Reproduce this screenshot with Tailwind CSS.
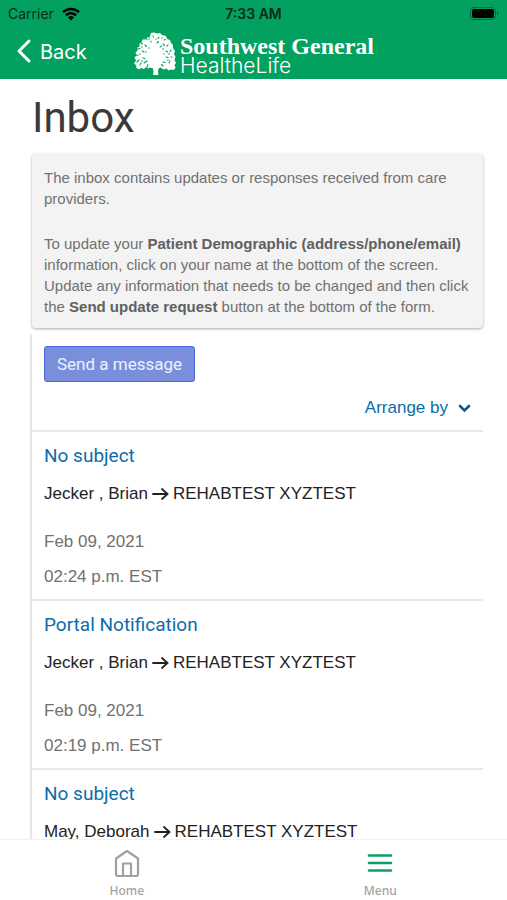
<!DOCTYPE html>
<html lang="en">
<head>
  <meta charset="UTF-8">
  <meta name="viewport" content="width=device-width, initial-scale=1.0">
  <title>Inbox</title>
  <script src="https://cdn.jsdelivr.net/npm/@tailwindcss/browser@4"></script>
</head>
<body class="bg-white flex flex-col h-screen overflow-hidden font-['Liberation_Sans',sans-serif]">
  <header class="bg-[#02a160] shrink-0">
    <!-- Status bar -->
    <div class="grid grid-cols-3 items-center h-7 px-2 text-sm text-[#062a1b] font-[Inter,sans-serif]">
      <div class="flex items-center gap-2">
        <span>Carrier</span>
        <svg class="w-[18px] h-[14px]" viewBox="0 0 18 14" fill="none" stroke="#000" stroke-width="2.5">
          <path d="M1 5.2a11.6 11.6 0 0 1 16 0"/>
          <path d="M3.9 8.3a7.4 7.4 0 0 1 10.2 0"/>
          <path d="M9 13.6 6 10.5a4.4 4.4 0 0 1 6 0z" fill="#000" stroke="none"/>
        </svg>
      </div>
      <span class="text-center font-semibold">7:33 AM</span>
      <svg class="justify-self-end w-[29px] h-[14px]" viewBox="0 0 29 14">
        <rect x=".5" y=".5" width="25" height="12" rx="3.5" fill="none" stroke="#03693f"/>
        <rect x="2" y="2" width="22" height="9" rx="2" fill="#000"/>
        <path d="M27 4.5c2 .6 2 3.4 0 4z" fill="#03693f"/>
      </svg>
    </div>
    <!-- Title bar -->
    <div class="relative flex items-center justify-center h-[51px]">
      <button type="button" class="absolute left-4 top-[10px] flex items-center gap-2 text-white text-xl font-[Inter,sans-serif]">
        <svg class="w-4 h-7" viewBox="0 0 16 28" fill="none" stroke="currentColor" stroke-width="3" stroke-linecap="round" stroke-linejoin="round">
          <path d="M13 3 3 13l10 10"/>
        </svg>
        Back
      </button>
      <div class="flex items-center gap-1 text-white">
        <svg class="w-[43px] h-[43px]" viewBox="0 0 43 43">
          <path fill="#fff" d="M18 1l3-.5 3 1 3-.5 2 2 4 1 1 3 3 1 1 3 2 2 0 3 2 3-1 3 1.500 3-1 3 1.500 3-1.500 2 1 3-2 2-3-.5-2 1-2-2-3 1-3-2-2 1-.5 3 .5 5h-5.500l.5-5-.5-3-3-1-2 1-2-1.500-2 2-3-1-2 1.500-3-2 .5-2-2.500-2 2-3-1.500-3 2-2-1-3 2-2 0-3 2-1 0-3 2-1 1-3 3 0 1-2 3 0z"/>
          <g fill="none" stroke="#02a160" stroke-width="1.1" stroke-linecap="round">
            <path d="M8 11l1.500 1M13 6l1 1.500M20 4l.5 1M26 5l-1 1.500M31 8l1.500-.5M5 17l2-.5M12 13l1.500 1.500M18 9l0 1M24 11l1.500-1.500M30 12l1.500 1.500M35 13l-1 1M3.500 23l1.500 .5M9 19l2 1M33 19l1.500 1M38 18l-1 1.500M4 30l2-2M10 26l2 .5M33 25l2 .5M39 25l-1 0M7 33l1-2M11 31l3-2M30 30l2 .5M36 31l1-2M14 35l1-2.500M30 34l-1.500-1.500M27 15l1.500-1"/>
          </g>
          <g fill="#02a160">
            <circle cx="16" cy="7" r=".7"/><circle cx="23" cy="7" r=".7"/><circle cx="29" cy="6" r=".7"/><circle cx="9" cy="15" r=".7"/>
            <circle cx="16" cy="16" r=".7"/><circle cx="30" cy="17" r=".8"/><circle cx="7" cy="22" r=".8"/><circle cx="13" cy="20" r=".7"/>
            <circle cx="36" cy="22" r=".8"/><circle cx="31" cy="22" r=".7"/><circle cx="35" cy="28" r=".8"/><circle cx="9" cy="29" r=".8"/>
          </g>
        </svg>
        <div class="flex flex-col">
          <span class="font-['Liberation_Serif',serif] font-bold text-2xl leading-6">Southwest General</span>
          <span class="font-[Inter,sans-serif] font-light text-[21px] leading-4">HealtheLife</span>
        </div>
      </div>
    </div>
  </header>

  <main class="flex-1 min-h-0 overflow-y-auto [scrollbar-width:none] pl-8 pr-6">
    <h1 class="pt-[14px] font-[Roboto,sans-serif] text-[42px] leading-[50px] text-[#3a3a3a]">Inbox</h1>

    <section class="mt-[11px] px-3 pt-[13px] pb-[11px] rounded-sm bg-[#f3f3f3] shadow-[0_1px_3px_#00000055] text-[15px] leading-[21px] text-[#717171]">
      <p>The inbox contains updates or responses received from care providers.</p>
      <p class="mt-6">To update your <strong class="text-[#606060]">Patient Demographic (address/phone/email)</strong> information, click on your name at the bottom of the screen. Update any information that needs to be changed and then click the <strong class="text-[#606060]">Send update request</strong> button at the bottom of the form.</p>
    </section>

    <section class="mt-[6px] -ml-[2px] border-l-2 border-[#e6e6e6]">
      <div class="px-3 pt-3 pb-3 flex flex-col items-start">
        <button type="button" class="h-9 px-3 rounded-[3px] border border-[#4565d6] bg-[#7a8fdb] text-[#eef1ff] text-[17px] leading-5 font-[Roboto,sans-serif]">Send a message</button>
        <button type="button" class="mt-4 self-end flex items-center gap-[10px] text-[17px] leading-5 text-[#0d6ca8]">
          Arrange by
          <svg class="w-[13px] h-[9px]" viewBox="0 0 13 9" fill="none" stroke="#07589a" stroke-width="2.6" stroke-linecap="round">
            <path d="M2 2l4.5 4.5L11 2"/>
          </svg>
        </button>
      </div>

      <ul>
        <li class="border-t-2 border-[#e8e8e8] px-3 pt-3 pb-[10px]">
          <a href="#" class="block font-[Roboto,sans-serif] text-[19px] leading-6 text-[#0d6ca8]">No subject</a>
          <p class="mt-[14px] flex items-center gap-1 text-[17px] leading-6 text-[#222]">Jecker , Brian
            <svg class="w-[17px] h-[14px]" viewBox="0 0 17 14" fill="none" stroke="currentColor" stroke-width="1.8" stroke-linecap="round"><path d="M1 7h14M10 2l5.5 5-5.5 5"/></svg>
            REHABTEST XYZTEST</p>
          <p class="mt-6 text-[17px] leading-6 text-[#717171]">Feb 09, 2021</p>
          <p class="mt-[11px] text-[17px] leading-6 text-[#717171]">02:24 p.m. EST</p>
        </li>
        <li class="border-t-2 border-[#e8e8e8] px-3 pt-3 pb-[10px]">
          <a href="#" class="block font-[Roboto,sans-serif] text-[19px] leading-6 text-[#0d6ca8]">Portal Notification</a>
          <p class="mt-[14px] flex items-center gap-1 text-[17px] leading-6 text-[#222]">Jecker , Brian
            <svg class="w-[17px] h-[14px]" viewBox="0 0 17 14" fill="none" stroke="currentColor" stroke-width="1.8" stroke-linecap="round"><path d="M1 7h14M10 2l5.5 5-5.5 5"/></svg>
            REHABTEST XYZTEST</p>
          <p class="mt-6 text-[17px] leading-6 text-[#717171]">Feb 09, 2021</p>
          <p class="mt-[11px] text-[17px] leading-6 text-[#717171]">02:19 p.m. EST</p>
        </li>
        <li class="border-t-2 border-[#e8e8e8] px-3 pt-3">
          <a href="#" class="block font-[Roboto,sans-serif] text-[19px] leading-6 text-[#0d6ca8]">No subject</a>
          <p class="mt-[14px] flex items-center gap-1 text-[17px] leading-6 text-[#222]">May, Deborah
            <svg class="w-[17px] h-[14px]" viewBox="0 0 17 14" fill="none" stroke="currentColor" stroke-width="1.8" stroke-linecap="round"><path d="M1 7h14M10 2l5.5 5-5.5 5"/></svg>
            REHABTEST XYZTEST</p>
        </li>
      </ul>
    </section>
  </main>

  <nav class="shrink-0 grid grid-cols-2 h-[61px] border-t border-[#f2f2f2] bg-white font-['Noto_Sans',sans-serif] text-xs text-[#a3a3a3]">
    <a href="#" class="flex flex-col items-center pt-2">
      <svg class="w-[30px] h-[30px]" viewBox="0 0 30 30" fill="none" stroke="#a0a0a0" stroke-width="2.2" stroke-linejoin="round">
        <path d="M4 10.5 15 3l11 7.500V26a2 2 0 0 1-2 2H6a2 2 0 0 1-2-2z"/>
        <path d="M11 28V15.500h8V28z"/>
      </svg>
      <span class="mt-[5px] leading-4 font-medium">Home</span>
    </a>
    <a href="#" class="flex flex-col items-center pt-2">
      <svg class="w-[30px] h-[30px]" viewBox="0 0 30 30" fill="none" stroke="#0f9d66" stroke-width="2.6" stroke-linecap="round">
        <path d="M4 7.5h22M4 15h22M4 22.5h22"/>
      </svg>
      <span class="mt-[5px] leading-4 font-medium">Menu</span>
    </a>
  </nav>
</body>
</html>
